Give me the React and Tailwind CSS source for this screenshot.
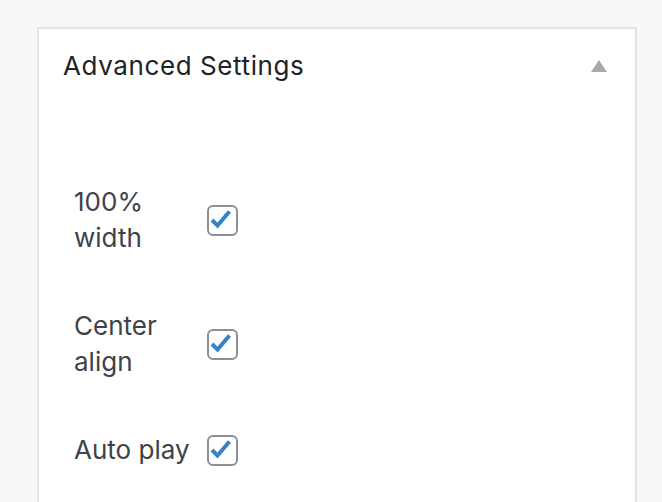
import React from "react";

const OPTIONS = [
    { id: "full-width", label: "100% width" },
    { id: "center", label: "Center align" },
    { id: "autoplay", label: "Auto play" },
];

function Check() {
    return (
        <span className="flex w-[31px] h-[31px] shrink-0 border-2 border-[#8c8f94] rounded-[6px] bg-white">
            <svg viewBox="0 0 27 27" className="w-[27px] h-[27px]">
                <polyline
                    points="3,13 8.5,18.6 20.5,4.5"
                    fill="none"
                    stroke="#3582c4"
                    strokeWidth="4"
                    strokeLinejoin="miter"
                />
            </svg>
        </span>
    );
}

export default function App() {
    return (
        <div className="min-h-screen bg-[#f7f8f9] pt-[27px] pl-[37px] overflow-hidden">
            <section className="w-[600px] h-[520px] bg-white border-2 border-[#e2e4e7]">
                <header className="flex items-center justify-between pt-[19px] pl-[24px] pr-[28px]">
                    <h2
                        className="text-[26px] leading-[36px] tracking-[0.6px] text-[#1d2327]"
                        style={{ fontFamily: "Inter, 'Noto Sans', sans-serif" }}
                    >
                        Advanced Settings
                    </h2>
                    <svg viewBox="0 0 16 12" className="w-[16px] h-[12px]">
                        <polygon points="8,0 16,12 0,12" fill="#a7aaad" />
                    </svg>
                </header>

                <div
                    className="flex flex-col gap-[52px] pt-[100px] pl-[35px]"
                    style={{ fontFamily: "Inter, 'Noto Sans', sans-serif" }}
                >
                    {OPTIONS.map((o) => (
                        <label key={o.id} className="flex items-center">
                            <span className="w-[116px] mr-[17px] text-[26px] leading-[36px] text-[#3c434a]">
                                {o.label}
                            </span>
                            <Check />
                        </label>
                    ))}
                </div>
            </section>
        </div>
    );
}
